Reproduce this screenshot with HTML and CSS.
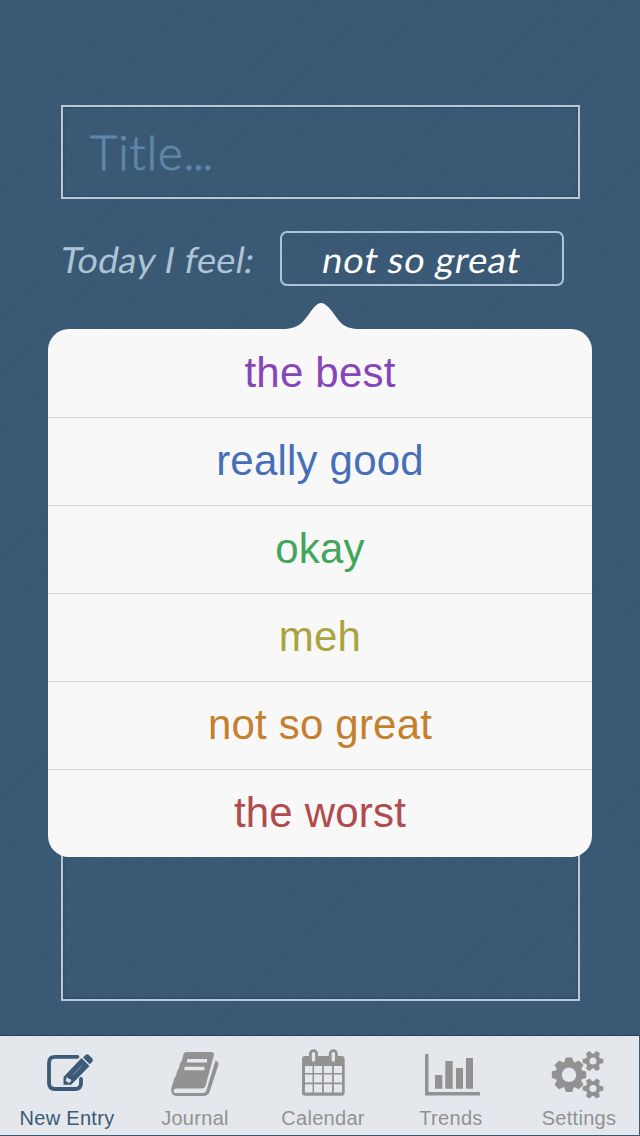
FILE: index.html
```html
<!DOCTYPE html>
<html lang="en">
<head>
<meta charset="utf-8">
<title>New Entry</title>
<link rel="stylesheet" href="styles.css">
</head>
<body>
<div class="screen">
  <svg class="grain" width="640" height="1136" aria-hidden="true">
    <filter id="noise" x="0" y="0" width="100%" height="100%">
      <feTurbulence type="fractalNoise" baseFrequency="0.5" numOctaves="2" seed="4"/>
      <feColorMatrix type="saturate" values="0"/>
    </filter>
    <rect width="640" height="1136" filter="url(#noise)"/>
  </svg>
  <main class="entry">
    <div class="title-field"><span class="placeholder">Title<span class="dots">...</span></span></div>
    <div class="mood-row">
      <span class="mood-label">Today I feel:</span>
      <div class="mood-select"><span class="mood-value">not so great</span>
        <div class="popover">
          <svg class="pointer" width="80" height="27" viewBox="0 0 80 27"><path d="M0 27V26C17 26 21 19 27 11C32 4 35 0 39 0S47 4 52 11C58 19 61 26 78 26V27Z" fill="#f8f8f8"/></svg>
          <ul class="moods">
            <li class="mood best">the best</li>
            <li class="mood good">really good</li>
            <li class="mood okay">okay</li>
            <li class="mood meh">meh</li>
            <li class="mood poor">not so great</li>
            <li class="mood worst">the worst</li>
          </ul>
        </div>
      </div>
    </div>
    <div class="body-field"></div>
  </main>
  <nav class="tabs">
    <div class="tab active">
      <svg class="icon" viewBox="0 0 128 68">
        <path d="M74.500 20.800H52Q46 20.800 46 26.800V47Q46 53 52 53H72Q78 53 78 47V43" fill="none" stroke="currentColor" stroke-width="3.800" stroke-linecap="round"/>
        <path d="M78.500 22L86.500 30L68.200 48.800H60.500V41Z" fill="currentColor"/>
        <path d="M80 21.500L82.800 18.800Q84.300 17.600 85.700 18.800L89.500 22.800Q90.500 24.200 89.400 25.600L86.700 28.300Z" fill="currentColor"/>
        <path d="M64.300 41.500L65.500 43.300L67.500 43.600L67.700 45.300L65.500 46.600L63 44.500Z" fill="#e4e7eb" stroke="#e4e7eb" stroke-width=".8"/>
        <path d="M70 38.800L79 29.500" stroke="#e4e7eb" stroke-width=".45"/>
      </svg>
      <span class="tab-label">New Entry</span>
    </div>
    <div class="tab">
      <svg class="icon" viewBox="0 0 128 68">
        <path transform="translate(0 1)" fill="currentColor" d="M55.500 15H80Q84 15 82.700 19L74.500 49Q73.500 51.500 71 51.500H46Q42.500 51.500 42.500 54.500Q42.800 56 45 56H72Q74.500 56 75.500 53L84.500 23.500Q88.500 25 87.200 28.500L78.500 55Q77 59 72.500 59H46Q39.500 59 40.200 51.500L42 46L43 42L45 38.500L46 34.500L48 31L49 26.500L51 23.500L52 18.500Q53 15 55.500 15Z"/>
        <path d="M56 24.800H76M53.500 32.500H73.500" stroke="#e4e7eb" stroke-width="3.400"/>
      </svg>
      <span class="tab-label">Journal</span>
    </div>
    <div class="tab">
      <svg class="icon" viewBox="0 0 128 68">
        <rect x="43" y="20" width="42.700" height="39.700" rx="3" fill="currentColor"/>
        <path d="M46 30H53.500V37H46ZM55 30H63V37H55ZM64.800 30H73V37H64.800ZM74.800 30H83V37H74.800ZM46 38.500H53.500V46.500H46ZM55 38.500H63V46.500H55ZM64.800 38.500H73V46.500H64.800ZM74.800 38.500H83V46.500H74.800ZM46 48.300H53.500V56.500H46ZM55 48.300H63V56.500H55ZM64.800 48.300H73V56.500H64.800ZM74.800 48.300H83V56.500H74.800Z" fill="#e4e7eb"/>
        <g fill="#e4e7eb" stroke="currentColor" stroke-width="2.800"><rect x="51.400" y="14.700" width="6.200" height="12.500" rx="3.100"/><rect x="71.200" y="14.700" width="6.200" height="12.500" rx="3.100"/></g>
      </svg>
      <span class="tab-label">Calendar</span>
    </div>
    <div class="tab">
      <svg class="icon" viewBox="0 0 128 68" fill="currentColor">
        <path d="M38 18H41.500V56H93V59.500H38ZM48 39H55.300V52.700H48ZM58.300 25H65.700V52.700H58.300ZM69 32H76V52.700H69ZM79 22H86V52.700H79Z"/>
      </svg>
      <span class="tab-label">Trends</span>
    </div>
    <div class="tab">
      <svg class="icon" viewBox="0 0 128 68">
        <defs>
          <path id="cog" d="M-4.500 0V-13L-3.200 -17.200H3.200L4.500 -13V0Z"/>
          <path id="pin" d="M-2.800 0V-7.500L-2 -10.300H2L2.800 -7.500V0Z"/>
          <g id="small-gear"><circle r="7.400"/><use href="#pin" transform="rotate(30)"/><use href="#pin" transform="rotate(90)"/><use href="#pin" transform="rotate(150)"/><use href="#pin" transform="rotate(210)"/><use href="#pin" transform="rotate(270)"/><use href="#pin" transform="rotate(330)"/><circle r="3.500" fill="#e4e7eb"/></g>
        </defs>
        <g fill="currentColor">
          <g transform="translate(54 38.800)"><circle r="13.500"/><use href="#cog"/><use href="#cog" transform="rotate(45)"/><use href="#cog" transform="rotate(90)"/><use href="#cog" transform="rotate(135)"/><use href="#cog" transform="rotate(180)"/><use href="#cog" transform="rotate(225)"/><use href="#cog" transform="rotate(270)"/><use href="#cog" transform="rotate(315)"/><circle r="7.200" fill="#e4e7eb"/></g>
          <use href="#small-gear" transform="translate(78 25)"/>
          <use href="#small-gear" transform="translate(78 52.500)"/>
        </g>
      </svg>
      <span class="tab-label">Settings</span>
    </div>
  </nav>
</div>
</body>
</html>
```
FILE: styles.css
```css
* { box-sizing: border-box; }
body { margin: 0; }
.screen {
  position: relative;
  display: flex;
  flex-direction: column;
  width: 640px;
  height: 1136px;
  overflow: hidden;
  background:
    repeating-linear-gradient(135deg, rgba(255,255,255,.012) 0 1px, transparent 1px 5px, rgba(0,0,0,.018) 5px 6px, transparent 6px 13px),
    #375774;
  font-family: "Liberation Sans", Arial, sans-serif;
}
.grain { position: absolute; inset: 0; opacity: .045; }
.entry {
  position: relative;
  display: flex;
  flex-direction: column;
  height: 1035px;
  padding: 105px 60px 34px 61px;
}
.title-field, .body-field {
  border: 2px solid #bac8d5;
  box-shadow: inset 0 0 3px rgba(20,40,65,.55);
}
.title-field {
  height: 94px;
  padding-left: 27px;
  font: 300 47px/91px Lato, sans-serif;
  color: #5f87aa;
}
.placeholder { letter-spacing: 1px; -webkit-text-stroke: .9px #5f87aa; }
.dots { letter-spacing: -1.6px; }
.mood-row {
  display: flex;
  justify-content: space-between;
  height: 55px;
  margin: 32px 16px 0 0;
  font: 400 36px/57px Lato, sans-serif;
}
.mood-label, .mood-value { display: inline-block; transform: skewX(-10deg); white-space: nowrap; }
.mood-label { color: #adc4d6; letter-spacing: .4px; }
.mood-select {
  position: relative;
  width: 284px;
  border: 2px solid #adc4d6;
  border-radius: 7px;
  color: #fff;
  line-height: 53px;
  text-align: center;
  letter-spacing: .8px;
}
.body-field { flex: 1; margin-top: 70px; }
.popover {
  position: absolute;
  z-index: 2;
  left: -234px;
  top: 96px;
  width: 544px;
  font: 400 42px/88px "Liberation Sans", Arial, sans-serif;
  letter-spacing: .2px;
}
.pointer { position: absolute; left: 234px; top: -26px; }
.moods {
  margin: 0;
  padding: 0;
  list-style: none;
  background: #f8f8f8;
  border-radius: 21px;
}
.mood { height: 88px; }
.mood + .mood { border-top: 1px solid #d1d3d5; line-height: 86px; }
.best { color: #8746b7; }
.good { color: #466fb8; }
.okay { color: #43a65a; }
.meh { color: #a9a43e; }
.poor { color: #c67f2c; }
.worst { color: #b04b4e; }
.tabs {
  position: relative;
  display: flex;
  width: 639px;
  height: 100px;
  padding-left: 3px;
  overflow: hidden;
  background: #e4e7eb;
  border-top: 1px solid #294159;
}
.tab {
  display: flex;
  flex: 0 0 128px;
  flex-direction: column;
  align-items: center;
  color: #929292;
}
.active { color: #3a5a77; }
.icon { width: 128px; height: 68px; }
.tab-label { font-size: 20px; line-height: 28px; letter-spacing: .3px; }
```
